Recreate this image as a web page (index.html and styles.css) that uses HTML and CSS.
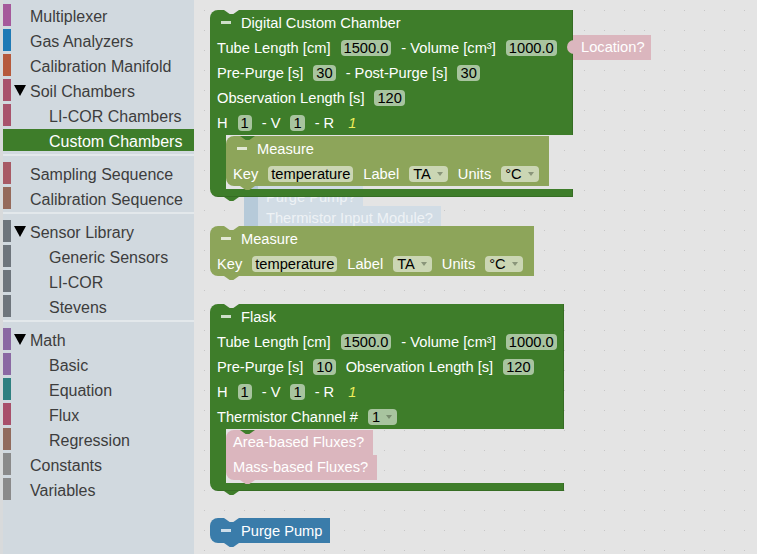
FILE: index.html
```html
<!DOCTYPE html>
<html lang="en">
<head>
  <meta charset="UTF-8" />
  <meta name="viewport" content="width=device-width, initial-scale=1.0"/>
  <title>Chamber Builder</title>
  <link rel="stylesheet" href="styles.css">
</head>
<body>
  <div class="app">
    <nav class="toolbox">
      <div class="cat"><span class="sw c-mux"></span><span class="lbl">Multiplexer</span></div>
      <div class="cat"><span class="sw c-gas"></span><span class="lbl">Gas Analyzers</span></div>
      <div class="cat"><span class="sw c-cal"></span><span class="lbl">Calibration Manifold</span></div>
      <div class="cat open"><span class="sw c-soil"></span><span class="tri"></span><span class="lbl">Soil Chambers</span></div>
      <div class="cat sub"><span class="sw c-soil"></span><span class="lbl">LI-COR Chambers</span></div>
      <div class="cat sub sel"><span class="sw"></span><span class="lbl">Custom Chambers</span></div>
      <div class="sep"></div>
      <div class="cat"><span class="sw c-seq"></span><span class="lbl">Sampling Sequence</span></div>
      <div class="cat"><span class="sw c-calseq"></span><span class="lbl">Calibration Sequence</span></div>
      <div class="sep"></div>
      <div class="cat open"><span class="sw c-sens"></span><span class="tri"></span><span class="lbl">Sensor Library</span></div>
      <div class="cat sub"><span class="sw c-sens"></span><span class="lbl">Generic Sensors</span></div>
      <div class="cat sub"><span class="sw c-sens"></span><span class="lbl">LI-COR</span></div>
      <div class="cat sub"><span class="sw c-sens"></span><span class="lbl">Stevens</span></div>
      <div class="sep"></div>
      <div class="cat open"><span class="sw c-math"></span><span class="tri"></span><span class="lbl">Math</span></div>
      <div class="cat sub"><span class="sw c-math"></span><span class="lbl">Basic</span></div>
      <div class="cat sub"><span class="sw c-eq"></span><span class="lbl">Equation</span></div>
      <div class="cat sub"><span class="sw c-flux"></span><span class="lbl">Flux</span></div>
      <div class="cat sub"><span class="sw c-reg"></span><span class="lbl">Regression</span></div>
      <div class="cat"><span class="sw c-grey"></span><span class="lbl">Constants</span></div>
      <div class="cat"><span class="sw c-grey"></span><span class="lbl">Variables</span></div>
    </nav>

    <main class="ws">
      <!-- faded block sitting under the chamber -->
      <div class="ghost">
        <div class="ghost-bar"></div>
        <div class="ghost-rows">
          <div class="ghost-row">Purge Pump?</div>
          <div class="ghost-row">Thermistor Input Module?</div>
        </div>
      </div>

      <div class="blk c-blk green chamber">
        <div class="top">
          <div class="hd"><span class="min"></span>Digital Custom Chamber</div>
          <div class="row">Tube Length [cm]<span class="fld">1500.0</span>- Volume [cm³]<span class="fld">1000.0</span></div>
          <div class="row">Pre-Purge [s]<span class="fld">30</span>- Post-Purge [s]<span class="fld">30</span></div>
          <div class="row">Observation Length [s]<span class="fld">120</span></div>
          <div class="row">H<span class="fld">1</span>- V<span class="fld">1</span>- R<span class="val">1</span></div>
        </div>
        <div class="stmt">
          <div class="arm"></div>
          <div class="slot">
            <div class="blk olive measure-in">
              <div class="hd"><span class="min"></span>Measure</div>
              <div class="row">Key<span class="fld">temperature</span>Label<span class="fld dd">TA<i class="arr"></i></span>Units<span class="fld dd">°C<i class="arr"></i></span></div>
            </div>
          </div>
        </div>
        <div class="foot"></div>
      </div>

      <div class="value-in location">Location?</div>

      <div class="blk olive measure">
        <div class="hd"><span class="min"></span>Measure</div>
        <div class="row">Key<span class="fld">temperature</span>Label<span class="fld dd">TA<i class="arr"></i></span>Units<span class="fld dd">°C<i class="arr"></i></span></div>
      </div>

      <div class="blk c-blk green flask">
        <div class="top">
          <div class="hd"><span class="min"></span>Flask</div>
          <div class="row">Tube Length [cm]<span class="fld">1500.0</span>- Volume [cm³]<span class="fld">1000.0</span></div>
          <div class="row">Pre-Purge [s]<span class="fld">10</span>Observation Length [s]<span class="fld">120</span></div>
          <div class="row">H<span class="fld">1</span>- V<span class="fld">1</span>- R<span class="val">1</span></div>
          <div class="row">Thermistor Channel #<span class="fld dd">1<i class="arr"></i></span></div>
        </div>
        <div class="stmt">
          <div class="arm"></div>
          <div class="slot">
            <div class="blk pink opt area">Area-based Fluxes?</div>
            <div class="blk pink opt mass follow">Mass-based Fluxes?</div>
          </div>
        </div>
        <div class="foot"></div>
      </div>

      <div class="blk blue purge">
        <div class="hd"><span class="min"></span>Purge Pump</div>
      </div>
    </main>
  </div>
</body>
</html>
```

FILE: styles.css
```css
body {
  margin: 0;
  font-family: 'Liberation Sans', Arial, sans-serif;
}

.app {
  display: flex;
  height: 554px;
  overflow: hidden;
}

/* ---- toolbox ---- */

.toolbox {
  width: 191px;
  flex: none;
  background: #d1d9df;
  border-left: 3px solid #d8dadb;
  padding-top: 4px;
  font-size: 16px;
  color: #3d3d3d;
}

.cat {
  display: flex;
  align-items: center;
  height: 22px;
  margin-bottom: 3px;
  white-space: nowrap;
}

.cat .sw {
  width: 8px;
  height: 22px;
  flex: none;
  margin-right: 19px;
}

.cat.sub .sw {
  margin-right: 38px;
}

.cat.open .sw {
  margin-right: 3px;
}

.lbl {
  padding-top: 4px;
}

.tri {
  width: 0;
  height: 0;
  border-left: 6px solid transparent;
  border-right: 6px solid transparent;
  border-top: 11px solid #000;
  margin: 1px 4px 0 0;
}

.cat.sel {
  background: #3e7d2a;
  color: #fff;
}

.sep {
  height: 2px;
  background: #e3e8eb;
  margin-bottom: 6px;
}

.c-mux { background: #a5599b; }
.c-gas { background: #1f7ab5; }
.c-cal { background: #b65a3c; }
.c-soil { background: #a8536c; }
.c-seq { background: #a85a65; }
.c-calseq { background: #956a5b; }
.c-sens { background: #6e757c; }
.c-math { background: #8b69a3; }
.c-eq { background: #2f8080; }
.c-flux { background: #a8506a; }
.c-reg { background: #916b5d; }
.c-grey { background: #8a8a8a; }

/* ---- workspace ---- */

.ws {
  position: relative;
  flex: 1;
  background-color: #e4e4e4;
  background-image:
    linear-gradient(90deg, #e4e4e4 19px, transparent 19px),
    linear-gradient(#e4e4e4 19px, #c6c6c6 19px);
  background-size: 20px 20px;
  background-position: -9px -9px;
}

/* ---- blocks ---- */

.green { --fill: #3e7d2a; }
.olive { --fill: #8da55a; }
.pink { --fill: #dbb6be; }
.blue { --fill: #3a7caa; }

.blk {
  position: relative;
  color: #fff;
  font-size: 14.67px;
  background: var(--fill);
  border-radius: 8px 0 0 8px;
  white-space: nowrap;
}

/* notch on top, tab below */
.blk::before,
.blk::after {
  content: '';
  position: absolute;
  left: 14px;
  width: 15px;
  height: 4px;
  clip-path: polygon(0 0, 100% 0, 62% 100%, 38% 100%);
}

.blk::before {
  top: 0;
  background: var(--under, #e4e4e4);
}

.blk::after {
  top: 100%;
  background: var(--fill);
}

.follow::before {
  display: none;
}

.c-blk {
  background: none;
}

.c-blk .top {
  background: var(--fill);
  border-top-left-radius: 8px;
  box-shadow: inset -1px 0 0 rgba(0, 0, 0, 0.12);
}

.stmt {
  display: flex;
}

.arm {
  width: 16px;
  flex: none;
  background: var(--fill);
}

.slot {
  --under: var(--fill);
  padding: 1px 0 3px;
}

.foot {
  height: 8px;
  background: var(--fill);
  border-bottom-left-radius: 8px;
  box-shadow: inset -1px -1px 0 rgba(0, 0, 0, 0.12);
}

.hd {
  display: flex;
  align-items: center;
  gap: 10px;
  height: 25px;
  padding-left: 11px;
}

.min {
  width: 10px;
  height: 3px;
  background: rgba(255, 255, 255, 0.75);
}

.row {
  display: flex;
  align-items: center;
  gap: 10px;
  height: 25px;
  padding-left: 7px;
}

.fld {
  display: flex;
  align-items: center;
  height: 16px;
  padding: 0 3px;
  border-radius: 4px;
  background: rgba(255, 255, 255, 0.55);
  color: #000;
}

.fld.dd {
  padding: 0 5px 0 4px;
}

.arr {
  width: 0;
  height: 0;
  margin-left: 6px;
  border-left: 3px solid transparent;
  border-right: 3px solid transparent;
  border-top: 4px solid rgba(60, 70, 50, 0.45);
}

.val {
  margin-left: 4px;
  font-style: italic;
  color: #eded5a;
}

.opt {
  height: 25px;
  line-height: 25px;
  padding-left: 7px;
}

.area {
  width: 140px;
  border-radius: 8px 0 0 0;
}

.mass {
  width: 144px;
  border-radius: 0 0 0 8px;
}

/* block placement on the canvas */

.chamber {
  position: absolute;
  left: 16px;
  top: 10px;
  width: 363px;
}

.measure-in {
  width: 323px;
  height: 50px;
}

.measure {
  position: absolute;
  left: 16px;
  top: 226px;
  width: 324px;
  height: 50px;
}

.flask {
  position: absolute;
  left: 16px;
  top: 304px;
  width: 354px;
}

.purge {
  position: absolute;
  left: 16px;
  top: 518px;
  width: 120px;
  height: 25px;
}

.value-in {
  position: absolute;
  height: 25px;
  line-height: 25px;
  padding-left: 8px;
  color: #fff;
  font-size: 14.67px;
  background: #dbb6be;
}

.value-in::before {
  content: '';
  position: absolute;
  left: -6px;
  top: 5px;
  width: 7px;
  height: 14px;
  border-radius: 7px 0 0 7px;
  background: #dbb6be;
}

.location {
  left: 379px;
  top: 35px;
  width: 70px;
}

/* faded block */

.ghost {
  position: absolute;
  left: 50px;
  top: 186px;
  display: flex;
  font-size: 14.67px;
  color: #eef2f5;
}

.ghost-bar {
  width: 14px;
  height: 45px;
  background: #b6cad9;
}

.ghost-row {
  height: 20px;
  line-height: 22px;
  padding-left: 8px;
  background: #d1dce5;
}

.ghost-row:first-child {
  width: 97px;
}

.ghost-row:last-child {
  width: 175px;
  height: 24px;
  line-height: 24px;
}
```
